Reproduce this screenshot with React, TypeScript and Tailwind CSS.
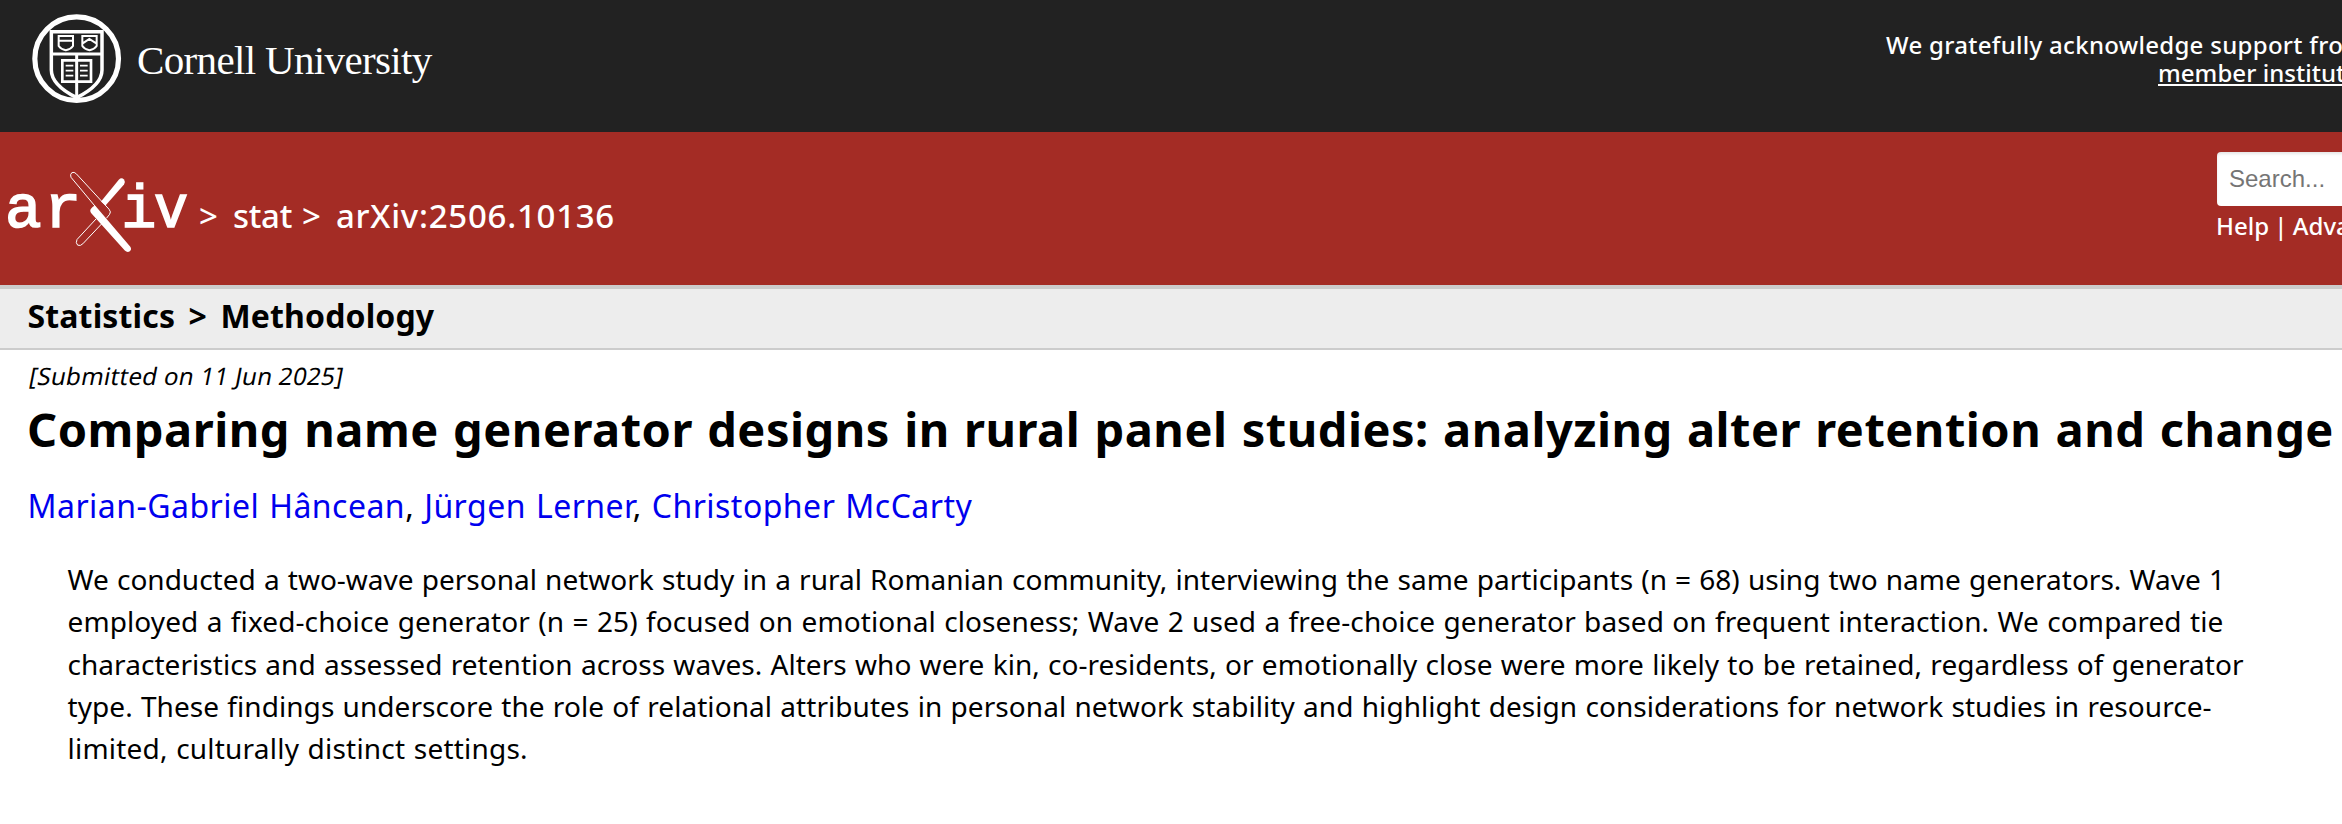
function CornellSeal() {
  return (
    <svg className="h-24 w-[94px] shrink-0" viewBox="0 0 282 288" fill="none" stroke="#fff">
      <circle cx="140" cy="146" r="125.5" strokeWidth="15.5" />
      <path d="M64 65.500H216V180C216 212 186 240 140 263C94 240 64 212 64 180Z" strokeWidth="10.500" />
      <path d="M62 132H218" strokeWidth="8.500" />
      <path d="M140 132V265" strokeWidth="9" />
      <path d="M97 151H183V215H97Z" strokeWidth="8" />
      <path d="M107 167H130M107 182H130M107 197H130M150 167H173M150 182H173M150 197H173" strokeWidth="5.500" />
      <path d="M86 78H129V108Q122 118 107.500 121Q93 118 86 108ZM86 92H129" strokeWidth="6" />
      <path d="M157 78H200V108Q193 118 178.500 121Q164 118 157 108ZM157 101L178 87L200 101" strokeWidth="6" />
    </svg>
  );
}

function ArxivLogo() {
  return (
    <svg className="h-[90px] w-[190px] shrink-0" viewBox="0 165 190 90" fill="#fff">
      <g stroke="#fff" strokeWidth="1.700" fontSize="61" fontFamily='"Liberation Mono", monospace'>
        <text transform="translate(5 227.300)">a</text>
        <text transform="translate(44.500 227.300)">r</text>
        <text transform="translate(121.500 227.300) scale(0.950 1)">i</text>
        <text transform="translate(154 227.300) scale(0.930 1)">v</text>
      </g>
      <path d="M101 201.500L118.800 179.700Q121.500 177 124 179.500Q125.800 182 124 184.500L105.500 205.500Z" />
      <path
        d="M95.300 206.500L71 177.300Q69.800 174.500 71.800 172.700Q74.200 171.500 76.300 173.800L109 209.200Q111.500 212 109.600 214.300L106.500 218.200M96 219L77 239.500Q75.300 243 77.700 245.200Q80.500 246.300 82.800 243.800L101.500 224"
        fill="none"
        stroke="#fff"
        strokeWidth="1"
      />
      <path d="M95.300 205.700L130.300 246.800Q132 249.300 129.800 251.300Q127.300 252.800 124.800 250.600L91.500 213.500Q89.300 211 91 208.800Q93 205.700 95.300 205.700Z" />
    </svg>
  );
}

const authorLink = "text-[#0000ee]";

export default function App() {
  return (
    <div className="h-[824px] w-[2342px] overflow-hidden bg-white font-['Noto_Sans',sans-serif] text-black">
      <header className="flex h-[132px] items-start bg-[#222] text-white">
        <div className="flex pt-[10px] pl-[30px]">
          <CornellSeal />
          <span className="pt-[25.500px] pl-[13px] font-['Liberation_Serif',serif] text-[41px] leading-[48px] tracking-[-0.650px] whitespace-nowrap">
            Cornell University
          </span>
        </div>
        <div className="ml-auto w-[456px] pt-[31px] text-[24px] leading-[28px] font-medium tracking-[0.300px] whitespace-nowrap">
          <div>We gratefully acknowledge support from</div>
          <div className="pl-[272px] tracking-[0.050px]">
            <a className="underline decoration-2 underline-offset-[2px]">member institutions</a>
          </div>
        </div>
      </header>

      <div className="flex h-[153px] items-start bg-[#a42c25] text-white">
        <div className="flex pt-[33px]">
          <ArxivLogo />
          <div className="flex pt-[31px] text-[33px] leading-[40px] font-medium whitespace-nowrap">
            <span className="w-[43px] pl-[9px]">&gt;</span>
            <span className="w-[69px] tracking-[-0.300px]">stat</span>
            <span className="w-[34px]">&gt;</span>
            <span className="tracking-[0.740px]">arXiv:2506.10136</span>
          </div>
        </div>
        <div className="ml-auto w-[125px] pt-[20px]">
          <div className="h-[54px] w-[240px] rounded-[4px] bg-white pl-[12px] font-['Liberation_Sans',sans-serif] text-[24px] leading-[53px] text-[#757575] shadow-[inset_0_2px_3px_rgba(10,10,10,0.1)]">
            Search...
          </div>
          <div className="-ml-px pt-[6px] text-[24px] leading-[28px] font-medium whitespace-nowrap [word-spacing:-1px]">
            Help | Advanced Search
          </div>
        </div>
      </div>

      <div className="h-[65px] border-t-4 border-b-2 border-[#ccc] bg-[#ededed] pl-[27.500px] text-[32px] leading-[53px] font-bold tracking-[0.140px] [word-spacing:5px]">
        Statistics &gt; Methodology
      </div>

      <main className="pt-[10px]">
        <div className="ml-[28px] w-max origin-[0_25px] -skew-x-[11deg] text-[24px] leading-[32px] tracking-[0.320px]">
          [Submitted on 11 Jun 2025]
        </div>
        <h1 className="mt-[9px] pl-[27px] text-[47px] leading-[56px] font-bold tracking-[0.500px] whitespace-nowrap [word-spacing:1.500px]">
          Comparing name generator designs in rural panel studies: analyzing alter retention and change
        </h1>
        <div className="mt-[29px] pl-[27.500px] text-[32px] leading-[40px] tracking-[0.470px] [word-spacing:1.200px]">
          <a className={authorLink}>Marian-Gabriel Hâncean</a>, <a className={authorLink}>Jürgen Lerner</a>,{" "}
          <a className={authorLink}>Christopher McCarty</a>
        </div>
        <blockquote className="mt-[32px] pl-[67.500px] text-[28px] leading-[42.250px] whitespace-nowrap [word-spacing:0.900px]">
          <div>
            We conducted a two-wave personal network study in a rural Romanian community, interviewing the same participants (n = 68) using two name generators. Wave 1
          </div>
          <div className="tracking-[0.106px]">
            employed a fixed-choice generator (n = 25) focused on emotional closeness; Wave 2 used a free-choice generator based on frequent interaction. We compared tie
          </div>
          <div className="tracking-[0.047px]">
            characteristics and assessed retention across waves. Alters who were kin, co-residents, or emotionally close were more likely to be retained, regardless of generator
          </div>
          <div className="tracking-[0.060px]">
            type. These findings underscore the role of relational attributes in personal network stability and highlight design considerations for network studies in resource-
          </div>
          <div className="tracking-[0.220px]">limited, culturally distinct settings.</div>
        </blockquote>
      </main>
    </div>
  );
}
